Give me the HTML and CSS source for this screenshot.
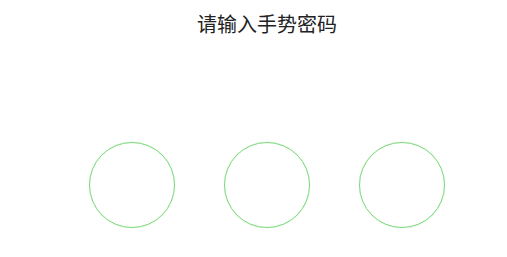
FILE: index.html
```html
<!DOCTYPE html>
<html lang="zh-CN">
<head>
  <meta charset="UTF-8">
  <title>手势密码</title>
  <link rel="stylesheet" href="styles.css">
</head>
<body>
  <div class="lock">
    <h1 class="lock-title">请输入手势密码</h1>
    <div class="lock-points">
      <div class="point"></div>
      <div class="point"></div>
      <div class="point"></div>
    </div>
  </div>
</body>
</html>
```

FILE: styles.css
```css
body {
  margin: 0;
  background: #ffffff;
  font-family: "Noto Sans CJK SC", "Noto Sans", sans-serif;
}
.lock {
  display: flex;
  flex-direction: column;
  align-items: center;
  padding-left: 27px;
}
.lock-title {
  margin: 0;
  padding-top: 10px;
  font-size: 20px;
  line-height: 28px;
  font-weight: normal;
  color: #222222;
}
.lock-points {
  display: flex;
  gap: 49px;
  margin-top: 104px;
}
.point {
  width: 84px;
  height: 84px;
  border: 1px solid #7ad87a;
  border-radius: 50%;
  box-shadow: 0 0 1px #a8eaa8;
}
```
